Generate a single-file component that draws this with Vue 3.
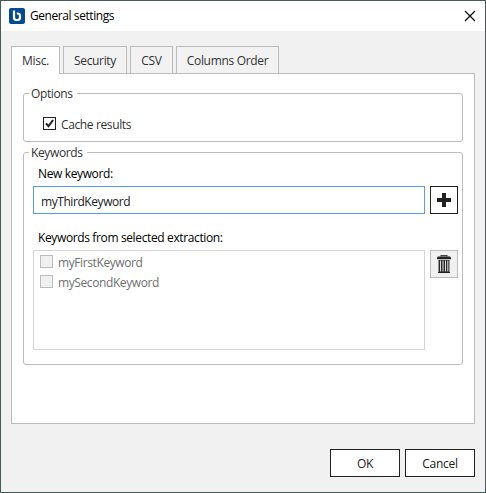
<script setup>
import { ref } from 'vue'

const tabs = [
  { label: 'Misc.', cls: 'misc' },
  { label: 'Security', cls: 'security' },
  { label: 'CSV', cls: 'csv' },
  { label: 'Columns Order', cls: 'columns' },
]
const active = ref('Misc.')
const keyword = ref('myThirdKeyword')
const keywords = ['myFirstKeyword', 'mySecondKeyword']
</script>

<template>
  <div class="window">
    <header class="titlebar">
      <svg class="logo" width="16" height="16" viewBox="0 0 16 16">
        <rect width="16" height="16" rx="2" fill="#044a8f" />
        <path d="M5 2.400V9.500Q5 12 7.400 12H8.400Q11 12 11 9.500V8Q11 5.500 8.400 5.500H7.800" stroke="#fff" stroke-width="2.200" fill="none" />
      </svg>
      <span class="title">General settings</span>
      <svg class="close" width="12" height="12" viewBox="0 0 12 12">
        <path d="M1 1l10 10M11 1L1 11" stroke="#000" stroke-width="1.15" fill="none" />
      </svg>
    </header>

    <nav class="tabs">
      <div
        v-for="t in tabs"
        :key="t.label"
        class="tab"
        :class="[t.cls, { active: t.label === active }]"
        @click="active = t.label"
      ><span>{{ t.label }}</span></div>
    </nav>

    <main class="panel">
      <section class="group options">
        <h2 class="legend">Options</h2>
        <div class="check-row">
          <span class="box">
            <svg width="11" height="11" viewBox="0 0 11 11">
              <path d="M2 5.300L4.500 8.200L9.100 2" stroke="#212121" stroke-width="2" fill="none" />
            </svg>
          </span>
          <span class="check-label">Cache results</span>
        </div>
      </section>

      <section class="group keywords">
        <h2 class="legend">Keywords</h2>
        <div class="label new">New keyword:</div>
        <div class="row">
          <div class="input">{{ keyword }}</div>
          <button class="icon-btn">
            <svg width="14" height="14" viewBox="0 0 14 14">
              <path d="M5 0h4v5h5v4H9v5H5V9H0V5H5z" fill="#212121" />
            </svg>
          </button>
        </div>
        <div class="label from">Keywords from selected extraction:</div>
        <div class="row">
          <div class="list">
            <div v-for="k in keywords" :key="k" class="item">
              <span class="box disabled"></span>
              <span class="check-label">{{ k }}</span>
            </div>
          </div>
          <button class="icon-btn muted">
            <svg width="14" height="18" viewBox="0 0 14 18">
              <path d="M4 1.500V.6h6v.9" stroke="#444" stroke-width="1.200" fill="none" />
              <path d="M1 1.500h12l1 1v1.700H0V2.500z" fill="#212121" />
              <path d="M1 5h12v13H1z" fill="#212121" />
              <path d="M1.500 5v12" stroke="#999" />
              <path d="M12.500 5v12" stroke="#999" />
              <path d="M3.500 5.500v11M6 5.500v11M8.500 5.500v11M10.800 5.500v11" stroke="#dcdcdc" stroke-width="1.100" />
            </svg>
          </button>
        </div>
      </section>
    </main>

    <footer class="footer">
      <button class="btn">OK</button>
      <button class="btn">Cancel</button>
    </footer>
  </div>
</template>

<style>
body {
  margin: 0;
}
</style>

<style scoped>
* {
  box-sizing: border-box;
}
.window {
  width: 486px;
  height: 493px;
  border: 1px solid #465a57;
  background: #f1f1f1;
  font: 12px/16px "Open Sans", "Noto Sans", sans-serif;
  letter-spacing: -0.37px;
  color: #000;
  white-space: nowrap;
  display: flex;
  flex-direction: column;
}
.titlebar {
  height: 30px;
  background: #fff;
  display: flex;
  align-items: center;
  padding: 0 9px 0 8px;
}
.title {
  margin-left: 5px;
  flex: 1;
  letter-spacing: -0.43px;
}
.close {
  margin-top: -1px;
}
.tabs {
  display: flex;
  gap: 3px;
  padding: 15px 0 0 10px;
}
.tab {
  height: 27px;
  border: 1px solid #bcbcbc;
  border-bottom: 0;
  background: #f2f2f2;
  color: #333;
  display: flex;
  align-items: center;
  justify-content: center;
  padding-top: 2px;
  letter-spacing: -0.33px;
}
.tab.active {
  background: #fff;
  height: 28px;
  margin-bottom: -1px;
  padding-top: 1px;
  z-index: 1;
}
.misc { width: 49px; }
.security { width: 64px; }
.csv { width: 43px; }
.columns { width: 103px; }
.panel {
  width: 464px;
  height: 351px;
  margin-left: 10px;
  border: 1px solid #bcbcbc;
  background: #fff;
  padding: 19px 11px 0;
}
.group {
  width: 440px;
  border: 1px solid #bcbcbc;
  border-radius: 3px;
}
.options {
  height: 49px;
}
.keywords {
  height: 213px;
  margin-top: 10px;
  padding: 0 4px 0 9px;
}
.legend {
  font: inherit;
  color: #333;
  background: #fff;
  width: max-content;
  height: 16px;
  margin: -8px 0 0 5px;
  padding: 0 4px 0 2px;
}
.keywords .legend {
  margin-left: -4px;
}
.check-row,
.item {
  display: flex;
  align-items: flex-start;
  gap: 5px;
}
.check-row {
  margin: 15px 0 0 19px;
  color: #333;
}
.box {
  width: 13px;
  height: 13px;
  border: 1px solid #212121;
  background: #fff;
  display: flex;
}
.box.disabled {
  border-color: #bcbcbc;
  background: #f0f0f0;
}
.label {
  height: 16px;
  padding-left: 5px;
}
.new {
  margin: 5px 0 4px;
}
.from {
  margin: 16px 0 4px;
}
.row {
  display: flex;
  gap: 5px;
}
.input {
  width: 392px;
  height: 28px;
  border: 1px solid #569de5;
  display: flex;
  align-items: center;
  padding: 3px 0 0 7px;
  color: #212121;
  letter-spacing: -0.43px;
}
.icon-btn {
  width: 28px;
  height: 28px;
  border: 1px solid #212121;
  background: #fff;
  padding: 0;
  display: flex;
  align-items: center;
  justify-content: center;
}
.icon-btn.muted {
  border-color: #bcbcbc;
  background: #f0f0f0;
}
.list {
  width: 392px;
  height: 100px;
  border: 1px solid #d5d5d5;
  padding: 4px 0 0 6px;
}
.item {
  height: 20px;
  color: #707070;
  letter-spacing: -0.4px;
}
.footer {
  display: flex;
  justify-content: flex-end;
  gap: 5px;
  padding: 25px 10px 0 0;
}
.btn {
  width: 70px;
  height: 28px;
  border: 1px solid #212121;
  background: #fff;
  padding: 2px 0 0;
  font: inherit;
  letter-spacing: -0.3px;
  color: #212121;
  display: flex;
  align-items: center;
  justify-content: center;
}
</style>
